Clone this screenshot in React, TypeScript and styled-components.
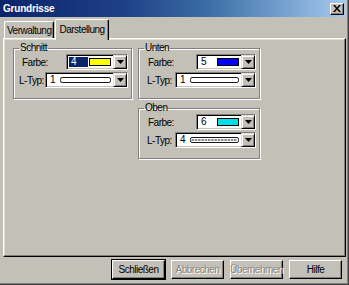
import React from "react";
import styled, { createGlobalStyle, css } from "styled-components";

const Global = createGlobalStyle`
  html, body { margin: 0; padding: 0; background: #c3c0b7; }
  body { font-family: "Liberation Sans", Arial, sans-serif; font-size: 10px; letter-spacing: -0.5px; color: #000; }
  * { box-sizing: border-box; }
`;

const Window = styled.div`
  width: 349px;
  height: 285px;
  background: #c3c0b7;
  border-right: 1px solid #404040;
  border-bottom: 1px solid #404040;
  box-shadow: inset -1px -1px 0 #808080;
  display: flex;
  flex-direction: column;
  padding: 0 2px 2px 0;
`;

const TitleBar = styled.div`
  height: 17px;
  background: linear-gradient(90deg, #0a246a 0%, #1e3f86 35%, #3a6ea5 60%, #a6caf0 100%);
  display: flex;
  align-items: center;
  justify-content: space-between;
  padding: 0 2px 0 3px;
`;

const Title = styled.span`
  color: #fff;
  font-weight: bold;
  font-size: 10px;
  letter-spacing: -0.2px;
`;

const CloseBtn = styled.div`
  width: 14px;
  height: 12px;
  background: #c3c0b7;
  border-top: 1px solid #fff;
  border-left: 1px solid #fff;
  border-right: 1px solid #000;
  border-bottom: 1px solid #000;
  box-shadow: inset -1px -1px 0 #808080;
  display: flex;
  align-items: center;
  justify-content: center;
`;

const Body = styled.div`
  flex: 1;
  display: flex;
  flex-direction: column;
  padding: 1px 0 0 3px;
`;

const TabRow = styled.div`
  display: flex;
  align-items: flex-end;
  height: 20px;
  padding-left: 1px;
  position: relative;
  z-index: 1;
`;

const Tab = styled.div<{ $active?: boolean }>`
  height: 17px;
  padding: 0 2px;
  display: flex;
  align-items: center;
  white-space: nowrap;
  background: #c3c0b7;
  border-top: 1px solid #fff;
  border-left: 1px solid #fff;
  border-right: 1px solid #000;
  border-radius: 2px 2px 0 0;
  box-shadow: inset -1px 0 0 #808080;
  ${(p) =>
    p.$active &&
    css`
      margin-left: 1px;
      margin-bottom: -2px;
      height: 21px;
      padding: 0 3px 2px 3px;
    `}
`;

const Panel = styled.div`
  height: 219px;
  border-top: 1px solid #fff;
  border-left: 1px solid #fff;
  border-right: 1px solid #000;
  border-bottom: 1px solid #000;
  box-shadow: inset -1px -1px 0 #808080, inset 1px 1px 0 #e0ddd5;
  display: flex;
  gap: 6px;
  padding: 3px 0 0 9px;
`;

const Column = styled.div`
  display: flex;
  flex-direction: column;
  gap: 3px;
`;

const Group = styled.fieldset<{ $w: number }>`
  width: ${(p) => p.$w}px;
  height: 57px;
  margin: 0;
  padding: 0 3px 0 0;
  border: 1px solid #808080;
  box-shadow: inset 1px 1px 0 #fff, 1px 1px 0 #fff;
  display: flex;
  flex-direction: column;
  gap: 2px;
`;

const Legend = styled.legend`
  padding: 0 1px;
  margin-left: 5px;
  line-height: 12px;
`;

const Row = styled.div`
  display: flex;
  align-items: center;
  justify-content: space-between;
  height: 16px;
`;

const Label = styled.span<{ $indent: number }>`
  margin-left: ${(p) => p.$indent}px;
  white-space: nowrap;
`;

const Combo = styled.div<{ $w: number }>`
  width: ${(p) => p.$w}px;
  flex: none;
  height: 16px;
  background: #fff;
  border-top: 1px solid #808080;
  border-left: 1px solid #808080;
  border-right: 1px solid #fff;
  border-bottom: 1px solid #fff;
  box-shadow: inset 1px 1px 0 #000, inset -1px -1px 0 #c3c0b7;
  display: flex;
  align-items: stretch;
  padding: 2px;
`;

const Value = styled.div<{ $sel?: boolean; $w: number }>`
  width: ${(p) => p.$w}px;
  background: ${(p) => (p.$sel ? "#0a246a" : "transparent")};
  color: ${(p) => (p.$sel ? "#fff" : "#000")};
  display: flex;
  align-items: center;
  padding-left: 2px;
  line-height: 10px;
`;

const Swatch = styled.div<{ $c: string }>`
  flex: 1;
  background: ${(p) => p.$c};
  border: 1px solid #000;
  margin: 1px 2px 1px 1px;
`;

const LineSample = styled.div`
  flex: 1;
  display: flex;
  align-items: center;
  padding-right: 2px;
`;

const DropBtn = styled.div`
  width: 14px;
  background: #c3c0b7;
  border-top: 1px solid #e0ddd5;
  border-left: 1px solid #e0ddd5;
  border-right: 1px solid #000;
  border-bottom: 1px solid #000;
  box-shadow: inset 1px 1px 0 #fff, inset -1px -1px 0 #808080;
  display: flex;
  align-items: center;
  justify-content: center;
  margin: -2px -2px -2px 0;
`;

const ButtonRow = styled.div`
  display: flex;
  justify-content: flex-end;
  gap: 6px;
  padding: 3px 4px 0 0;
`;

const Button = styled.div<{ $default?: boolean; $disabled?: boolean }>`
  width: 53px;
  height: 19px;
  display: flex;
  align-items: center;
  justify-content: center;
  white-space: nowrap;
  background: #c3c0b7;
  border-top: 1px solid #fff;
  border-left: 1px solid #fff;
  border-right: 1px solid #000;
  border-bottom: 1px solid #000;
  box-shadow: inset -1px -1px 0 #808080;
  color: ${(p) => (p.$disabled ? "#8a877f" : "#000")};
  text-shadow: ${(p) => (p.$disabled ? "1px 1px 0 #fff" : "none")};
  ${(p) =>
    p.$default &&
    css`
      outline: 1px solid #000;
    `}
`;

const Arrow = () => (
  <svg width="7" height="4" viewBox="0 0 7 4">
    <path d="M0 0h7L3.5 4z" fill="#000" />
  </svg>
);

const Line = ({ dashed }: { dashed?: boolean }) => (
  <svg width="100%" height="6" preserveAspectRatio="none" viewBox="0 0 60 6">
    <rect x="0.5" y="0.5" width="59" height="5" rx="2" fill="#fff" stroke="#000" />
    {dashed && <line x1="2" y1="3" x2="58" y2="3" stroke="#000" strokeDasharray="3 1" />}
  </svg>
);

type G = {
  name: string;
  w: number;
  farbe: { v: string; c: string; sel?: boolean; w: number; vw: number; indent: number };
  ltyp: { v: string; dashed?: boolean; w: number; indent: number };
};

const groups: G[] = [
  { name: "Schnitt", w: 119, farbe: { v: "4", c: "#ffff00", sel: true, w: 62, vw: 19, indent: 8 }, ltyp: { v: "1", w: 83, indent: 5 } },
  { name: "Unten", w: 122, farbe: { v: "5", c: "#0000ff", w: 60, vw: 17, indent: 9 }, ltyp: { v: "1", w: 81, indent: 8 } },
  { name: "Oben", w: 122, farbe: { v: "6", c: "#00e0e8", w: 60, vw: 17, indent: 9 }, ltyp: { v: "4", dashed: true, w: 81, indent: 8 } },
];

const GroupBox = ({ g }: { g: G }) => (
  <Group $w={g.w}>
    <Legend>{g.name}</Legend>
    <Row>
      <Label $indent={g.farbe.indent}>Farbe:</Label>
      <Combo $w={g.farbe.w}>
        <Value $sel={g.farbe.sel} $w={g.farbe.vw}>{g.farbe.v}</Value>
        <Swatch $c={g.farbe.c} />
        <DropBtn><Arrow /></DropBtn>
      </Combo>
    </Row>
    <Row>
      <Label $indent={g.ltyp.indent}>L-Typ:</Label>
      <Combo $w={g.ltyp.w}>
        <Value $w={12}>{g.ltyp.v}</Value>
        <LineSample><Line dashed={g.ltyp.dashed} /></LineSample>
        <DropBtn><Arrow /></DropBtn>
      </Combo>
    </Row>
  </Group>
);

export default function App() {
  return (
    <>
      <Global />
      <Window>
        <TitleBar>
          <Title>Grundrisse</Title>
          <CloseBtn>
            <svg width="8" height="7" viewBox="0 0 8 7">
              <path d="M0 0h2l2 2.5L6 0h2L5 3.5 8 7H6L4 4.5 2 7H0l3-3.5z" fill="#000" />
            </svg>
          </CloseBtn>
        </TitleBar>
        <Body>
          <TabRow>
            <Tab>Verwaltung</Tab>
            <Tab $active>Darstellung</Tab>
          </TabRow>
          <Panel>
            <Column>
              <GroupBox g={groups[0]} />
            </Column>
            <Column>
              <GroupBox g={groups[1]} />
              <GroupBox g={groups[2]} />
            </Column>
          </Panel>
          <ButtonRow>
            <Button $default>Schließen</Button>
            <Button $disabled>Abbrechen</Button>
            <Button $disabled>Übernehmen</Button>
            <Button>Hilfe</Button>
          </ButtonRow>
        </Body>
      </Window>
    </>
  );
}
